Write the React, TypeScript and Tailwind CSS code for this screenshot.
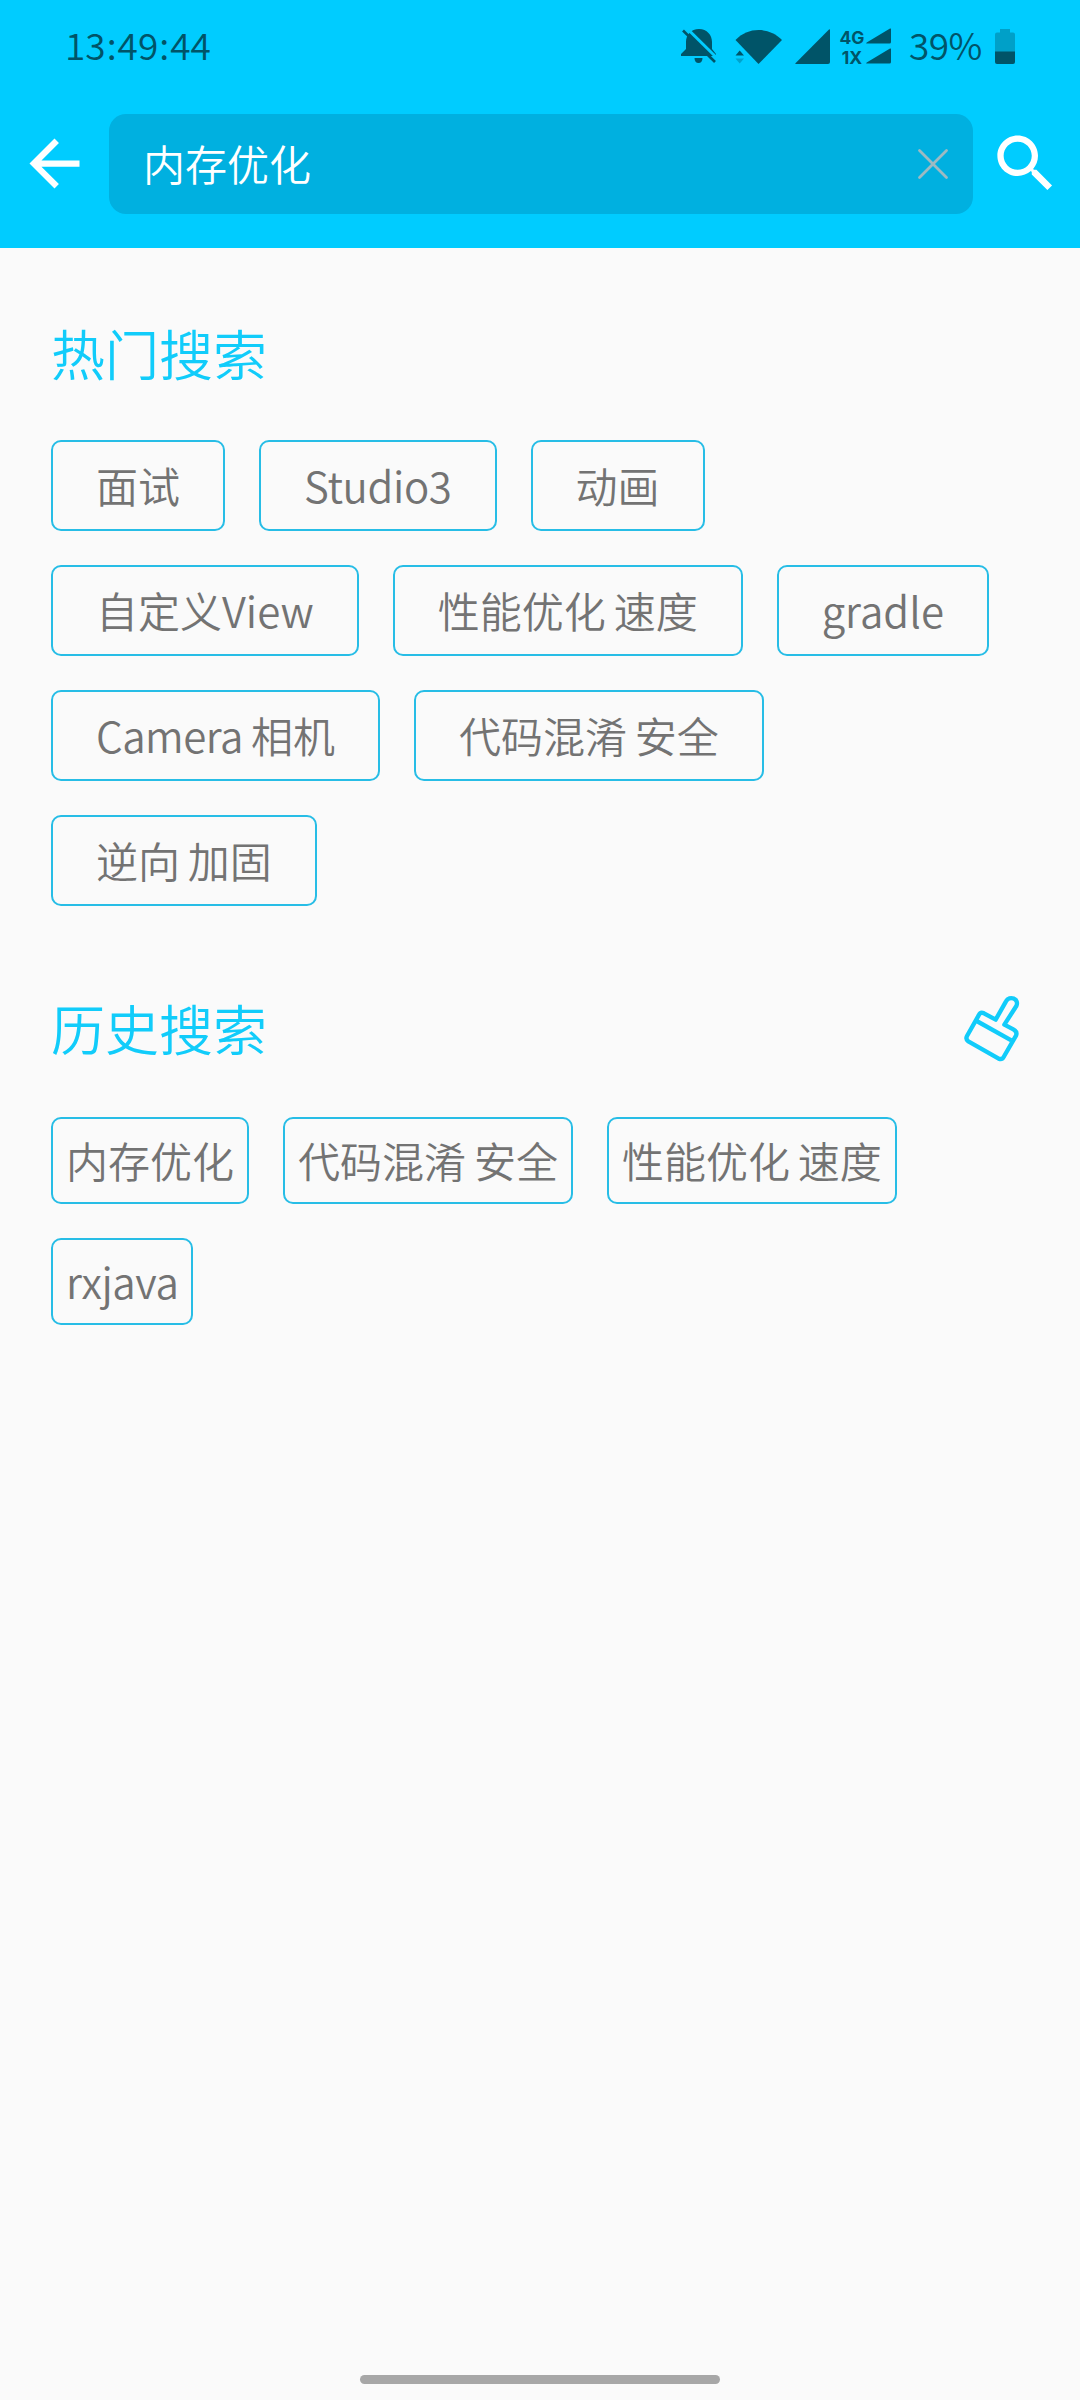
import React from "react";

const hot = ["面试", "Studio3", "动画", "自定义View", "性能优化 速度", "gradle", "Camera 相机", "代码混淆 安全", "逆向 加固"];
const recent = ["内存优化", "代码混淆 安全", "性能优化 速度", "rxjava"];

const tracking: Record<string, string> = {
  Studio3: "tracking-[-0.36px]",
  Camera: "tracking-[-0.5px]",
  rxjava: "tracking-[-0.45px]",
};

function BellOff() {
  return (
    <svg className="h-[37px] w-[36px]" viewBox="0 0 36 37" fill="#005468">
      <path d="M0 28v-2l5-5V14C5 7 10 1 18 1s13 6 13 13v7l4 5v2H0z" />
      <path d="M13.500 30h8c0 3-1.500 5-4 5s-4-2-4-5z" />
      <path d="M4.500-1L37 31" stroke="#00ccff" strokeWidth="3" />
      <path d="M2 2.500L34 34" stroke="#005468" strokeWidth="2.600" />
    </svg>
  );
}

function Wifi() {
  return (
    <svg className="ml-[18px] h-[37px] w-[48px]" viewBox="0 0 48 37" fill="#005468">
      <path d="M0.500 12C13-1.300 34-1.300 47 12L23.500 36z" />
      <path d="M-1 21L5 19.500 11 27V37H-1z" fill="#00ccff" />
      <path d="M0.500 27.500L4.700 22.500 9 27.500z" />
      <path d="M0.500 30.500L4.700 35.500 9 30.500z" fill="#00a3cc" />
    </svg>
  );
}

function Signal() {
  return (
    <svg className="ml-[12px] h-[37px] w-[36px]" viewBox="0 0 36 37" fill="#005468">
      <path d="M34 1.500q1-.8 1 .6V34q0 2-2 2H1.200q-1.400 0-.5-1z" />
    </svg>
  );
}

function DualSignal() {
  return (
    <div className="ml-[9px] flex h-[37px] w-[54px]">
      <div className="flex h-[37px] w-[26px] shrink-0 flex-col items-center gap-px font-['Inter',sans-serif] text-[17.500px] leading-[19px] font-bold text-[#005468]">
        <span className="pr-[2px]">4G</span>
        <span className="pr-[2px]">1X</span>
      </div>
      <svg className="h-[37px] w-[26px] shrink-0" viewBox="0 0 26 37" fill="#005468">
        <path d="M24 .6q1-.6 1 .4V14q0 1.500-1.500 1.500H1q-1.500 0-.3-1z" />
        <path d="M24 20.600q1-.6 1 .4V34q0 1.500-1.500 1.500H1q-1.500 0-.3-1z" />
      </svg>
    </div>
  );
}

function Battery() {
  return (
    <svg className="ml-[13px] h-[37px] w-[20px]" viewBox="0 0 20 37">
      <path d="M5 1h10v3.500h3q2 0 2 2V24H0V6.500q0-2 2-2h3z" fill="#00a0c8" />
      <path d="M0 23.500h20V34q0 2-2 2H2q-2 0-2-2z" fill="#005468" />
    </svg>
  );
}

function Brush() {
  return (
    <svg className="mb-[10px] h-[110px] w-[120px]" viewBox="0 0 360 330" fill="none" stroke="#11ccfa" strokeWidth="13" strokeLinejoin="round">
      <path d="M132 130L167 149L198 94C208 75 239 86 229 108L193 164L220 178Q233 185 228 197L191 261Q186 270 176 266L85 214Q76 208 81 198L116 136Q121 125 132 130Z" />
      <path d="M110 153L214 211" />
    </svg>
  );
}

function Chip({ label, wide }: { label: string; wide?: boolean }) {
  return (
    <button
      className={
        "flex items-center justify-center rounded-[10px] border-2 border-[#27bde6] pb-[2px] text-[42px] leading-none font-[350] whitespace-pre text-[#737373] [word-spacing:-1.5px] " +
        (wide ? "h-[91px] px-[43px]" : "h-[87px] px-[13px]")
      }
    >
      {label.split(/([A-Za-z0-9]+)/).map((part, i) => (
        <span key={i} className={tracking[part]}>
          {part}
        </span>
      ))}
    </button>
  );
}

export default function App() {
  return (
    <div className="flex h-[2400px] w-[1080px] flex-col bg-[#fafafa] font-['Noto_Sans_CJK_SC',sans-serif]">
      <header className="h-[248px] bg-[#00ccff]">
        <div className="flex h-[92px] items-center justify-between pr-[65px] pl-[65px] text-[37px] leading-none font-[350] text-[#005468]">
          <span className="pb-[3px]">
            13<span className="px-px">:</span>49<span className="px-px">:</span>44
          </span>
          <div className="flex items-center">
            <BellOff />
            <Wifi />
            <Signal />
            <DualSignal />
            <span className="ml-[15px] w-[73px] pb-[3px] tracking-[-0.6px] whitespace-nowrap">39%</span>
            <Battery />
          </div>
        </div>
        <div className="flex items-center pt-[22px] pl-[17px]">
          <svg className="mb-[2px] h-[75px] w-[75px]" viewBox="0 0 24 24" fill="#fff">
            <path d="M20 11H7.830l5.590-5.590L12 4l-8 8 8 8 1.410-1.410L7.830 13H20v-2z" />
          </svg>
          <div className="ml-[17px] flex h-[100px] w-[864px] items-center justify-between rounded-[17px] bg-[#00b0e0] pr-[23px] pb-px pl-[34px]">
            <span className="pb-[2px] text-[42px] leading-none font-[350] text-white">内存优化</span>
            <svg className="h-[34px] w-[34px]" viewBox="0 0 34 34" stroke="#9dbac2" strokeWidth="2.800" strokeLinecap="round">
              <path d="M3.500 3.500L30.500 30.500M30.500 3.500L3.500 30.500" />
            </svg>
          </div>
          <svg className="mb-[2px] ml-[15px] h-[75px] w-[75px]" viewBox="0 0 24 24" fill="#fff">
            <path d="M15.500 14h-.79l-.28-.27C15.410 12.590 16 11.110 16 9.500 16 5.910 13.090 3 9.500 3S3 5.910 3 9.500 5.910 16 9.500 16c1.610 0 3.090-.59 4.230-1.570l.27.28v.79l5 4.990L20.490 19l-4.990-5zm-6 0C7.010 14 5 11.990 5 9.500S7.010 5 9.500 5 14 7.010 14 9.500 11.990 14 9.500 14z" />
          </svg>
        </div>
      </header>

      <main className="flex-1 px-[51px]">
        <h2 className="mt-[65px] h-[80px] text-[54px] leading-[80px] font-[350] text-[#11ccfa]">热门搜索</h2>
        <div className="mt-[47px] flex flex-wrap gap-[34px]">
          {hot.map((t) => (
            <Chip key={t} label={t} wide />
          ))}
        </div>
        <div className="mt-[69px] -mr-[31px] flex h-[110px] items-center justify-between">
          <h2 className="mb-[4px] text-[54px] leading-[80px] font-[350] text-[#11ccfa]">历史搜索</h2>
          <Brush />
        </div>
        <div className="mt-[32px] flex flex-wrap gap-[34px]">
          {recent.map((t) => (
            <Chip key={t} label={t} />
          ))}
        </div>
      </main>

      <div className="mx-auto mb-[16px] h-[9px] w-[360px] rounded-full bg-[#a7a7a7]" />
    </div>
  );
}
